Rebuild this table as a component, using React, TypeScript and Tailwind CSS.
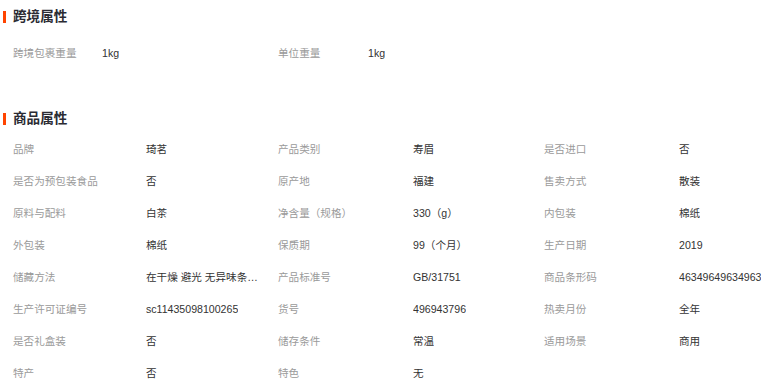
const crossBorder: [string, string][] = [
  ['跨境包裹重量', '1kg'],
  ['单位重量', '1kg'],
]

const goods: [string, string][] = [
  ['品牌', '琦茗'],
  ['产品类别', '寿眉'],
  ['是否进口', '否'],
  ['是否为预包装食品', '否'],
  ['原产地', '福建'],
  ['售卖方式', '散装'],
  ['原料与配料', '白茶'],
  ['净含量（规格）', '330（g）'],
  ['内包装', '棉纸'],
  ['外包装', '棉纸'],
  ['保质期', '99（个月）'],
  ['生产日期', '2019'],
  ['储藏方法', '在干燥 避光 无异味条件下储存'],
  ['产品标准号', 'GB/31751'],
  ['商品条形码', '46349649634963'],
  ['生产许可证编号', 'sc11435098100265'],
  ['货号', '496943796'],
  ['热卖月份', '全年'],
  ['是否礼盒装', '否'],
  ['储存条件', '常温'],
  ['适用场景', '商用'],
  ['特产', '否'],
  ['特色', '无'],
]

function Heading({ title }: { title: string }) {
  return (
    <div className="flex h-5 items-center">
      <span className="h-3 w-[3px] bg-[#ff4400]" />
      <h2 className="ml-[7px] text-[13.6px] font-bold leading-5 text-[#2b2b33]">{title}</h2>
    </div>
  )
}

function Row({ label, value, labelWidth }: { label: string; value: string; labelWidth: string }) {
  return (
    <div className="flex h-8 items-center pl-[10px]">
      <span className={`${labelWidth} shrink-0 text-[#9a9a9a]`}>{label}</span>
      <span className="max-w-[116px] truncate text-[#333]">{value}</span>
    </div>
  )
}

export default function App() {
  return (
    <div
      className="w-[774px] bg-white pl-[3px] pt-[7px] text-[10.6px]"
      style={{ fontFamily: '"Liberation Sans", "Noto Sans CJK SC", sans-serif' }}
    >
      <Heading title="跨境属性" />
      <div className="mt-[11px] grid grid-cols-[265px_265px_1fr]">
        {crossBorder.map(([l, v], i) => (
          <Row key={l} label={l} value={v} labelWidth={i === 0 ? 'w-[89px]' : 'w-[90px]'} />
        ))}
      </div>

      <div className="mt-[39px]">
        <Heading title="商品属性" />
      </div>
      <div className="mt-[5px] grid grid-cols-[265px_266px_1fr]">
        {goods.map(([l, v], i) => (
          <Row key={l} label={l} value={v} labelWidth={i % 3 === 0 ? 'w-[133px]' : 'w-[135px]'} />
        ))}
      </div>
    </div>
  )
}
